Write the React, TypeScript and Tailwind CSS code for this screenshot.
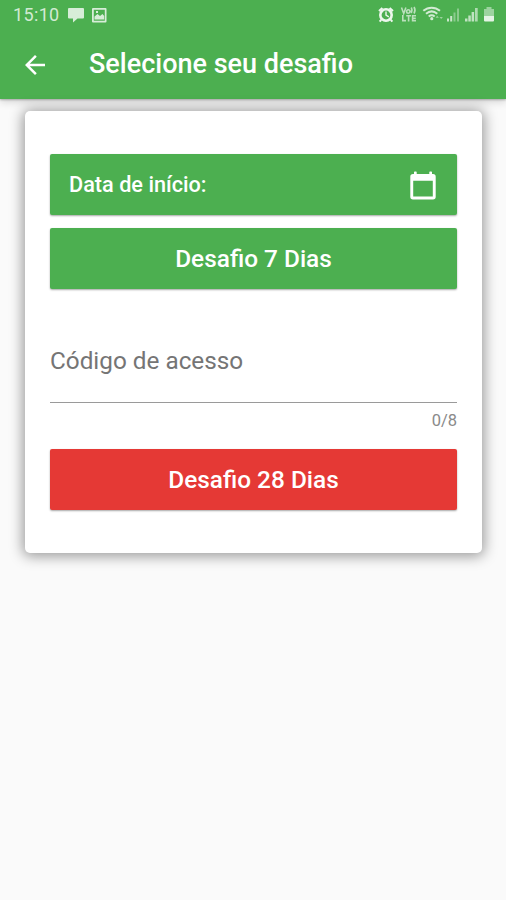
import { useState } from 'react';
import { MdArrowBack } from 'react-icons/md';

function StatusIcons() {
  return (
    <svg className="h-8 w-[140px]" viewBox="0 0 140 32" fill="#fff" stroke="none">
      {/* alarm */}
      <g opacity="0.9">
        <path d="M12.300 10.200l3.400-3 1.400 1.600-3.400 3zM27.700 10.200l-3.400-3-1.400 1.600 3.400 3z" />
        <path fillRule="evenodd" d="M20 8a7 7 0 1 0 0 14 7 7 0 0 0 0-14zm0 2.600a4.400 4.400 0 1 1 0 8.800 4.400 4.400 0 0 1 0-8.800z" />
        <path d="M19.300 11.500h1.400v3.300l2.500 1.500-.7 1.200-3.200-2zM14.500 19l1.500 1.500-1.600 1.700-1.500-1.200zM25.500 19L24 20.500l1.600 1.700 1.500-1.200z" />
      </g>
      {/* volte */}
      <g fill="none" stroke="#fff" strokeWidth="1.6" opacity="0.62">
        <path d="M35.500 7.500l2.200 6 2.200-6M42.300 9.800a1.700 1.700 0 1 0 0 3.400 1.700 1.700 0 0 0 0-3.400M45.300 7.500q1.500 2.800 0 5.500M48 7q2 3.300 0 6.500" />
        <path d="M36.800 15v5.600h3.200M40.200 15.700h4.800M42.600 15.700v5.700M50 15.700h-3.400v4.900H50M46.600 18.200h3.200" />
      </g>
      {/* wifi */}
      <g fill="none" stroke="#fff" strokeWidth="2" opacity="0.75">
        <path d="M57.300 10.800c5-4.200 11.700-4.200 16.700 0M60 13.700c3.700-3 7.700-3 11.300 0M62.700 16.500c2-1.600 4-1.600 6 0" />
      </g>
      <circle cx="65.800" cy="18.700" r="1.600" opacity="0.75" />
      <path d="M69.500 17.700l1.700-2 1.700 2zM73.500 17l1.700 2 1.700-2z" opacity="0.45" />
      {/* signal */}
      <path d="M81 18.500h2v3h-2zM84.200 16h2v5.500h-2z" opacity="0.7" />
      <path d="M87.500 12.500h2v9h-2zM91 8.500h2v13h-2z" opacity="0.35" />
      <path d="M99 18.500h2.500v3H99zM102.300 15.500h2.500v6h-2.500zM105.600 12h2.500v9.500h-2.500z" opacity="0.65" />
      <path d="M109 8h2.700v13.500H109z" opacity="0.55" />
      {/* battery */}
      <path d="M120.500 7h5v2h2.500v7h-10V9h2.500z" opacity="0.45" />
      <path d="M118 16h10v4.500q0 1-1 1h-8q-1 0-1-1z" opacity="0.85" />
    </svg>
  );
}

function CalendarIcon() {
  return (
    <svg className="mt-px h-[29px] w-[26px]" viewBox="0 0 26 29" fill="#fff">
      <path
        fillRule="evenodd"
        d="M3 3h1V1.200q0-.7.7-.7H6q.7 0 .7.700V3h12.600V1.200q0-.7.700-.7h1.300q.7 0 .7.700V3h1q2.700 0 2.700 2.700v20q0 2.700-2.700 2.700H3Q.3 28.400.3 25.700v-20Q.3 3 3 3zm.2 6.700v15.800h19.600V9.700z"
      />
    </svg>
  );
}

function StatusBar() {
  return (
    <div className="flex h-8 items-center justify-between">
      <div className="flex items-center pl-[13px]">
        <span className="w-[54px] pb-0.5 text-[18px] leading-7 tracking-[0.35px] text-white/75">15:10</span>
        <svg className="h-8 w-10" viewBox="0 0 40 32" fill="#fff" opacity="0.78">
          <path d="M2 8h14q1 0 1 1v8.500q0 1-1 1h-5.500l-4.500 4v-4H2q-1 0-1-1V9q0-1 1-1z" />
          <path fillRule="evenodd" d="M26 8h12.500q1 0 1 1v12.500q0 1-1 1H26q-1 0-1-1V9q0-1 1-1zm.8 1.800v10.900h11V9.800z" />
          <path d="M27.500 19.500v-3l3-2.500 2.500 2 2.500-2 1.700 2v3.500zM29 11h2v2h-2z" />
        </svg>
      </div>
      <StatusIcons />
    </div>
  );
}

export default function App() {
  const [code, setCode] = useState('');

  return (
    <div className="flex min-h-[900px] w-full flex-col bg-[#fafafa] font-['Roboto',sans-serif]">
      <header className="h-[98.5px] bg-[#4caf50] shadow-[0_1px_2px_rgba(0,0,0,0.25),0_3px_8px_rgba(0,0,0,0.15)]">
        <StatusBar />
        <div className="flex h-[66px] items-center pl-5">
          <button type="button" aria-label="Voltar" className="mr-[39px] text-white">
            <MdArrowBack className="size-[30px]" />
          </button>
          <h1 className="pb-[3px] text-[27px] leading-8 font-medium text-white">Selecione seu desafio</h1>
        </div>
      </header>

      <main className="mx-6 mt-[12.5px] ml-[25px] flex h-[442px] flex-col rounded-[5px] bg-white px-[25px] pt-[43px] shadow-[0_1px_14px_2px_rgba(0,0,0,0.4)]">
        <button
          type="button"
          className="flex h-[61px] shrink-0 items-center justify-between rounded-[2px] bg-[#4caf50] pr-[21px] pl-[19px] text-white shadow-[0_1px_2px_rgba(0,0,0,0.35)]"
        >
          <span className="text-[21.7px] leading-7 font-medium">Data de início:</span>
          <CalendarIcon />
        </button>
        <button
          type="button"
          className="mt-[13px] h-[61px] shrink-0 rounded-[2px] bg-[#4caf50] pt-px text-[24.400px] leading-8 font-medium text-white shadow-[0_1px_2px_rgba(0,0,0,0.35)]"
        >
          Desafio 7 Dias
        </button>

        <input
          value={code}
          maxLength={8}
          onChange={(e) => setCode(e.target.value)}
          placeholder="Código de acesso"
          className="mt-[31px] h-[83px] w-full shrink-0 border-b border-[#9a9a9a] pb-px text-[24.3px] text-[#333] outline-none placeholder:text-[#757575]"
        />
        <span className="mt-[9px] h-[18px] text-right text-[16.500px] leading-[18px] text-[#8a8a8a]">{code.length}/8</span>

        <button
          type="button"
          className="mt-[19px] h-[61px] shrink-0 rounded-[2px] bg-[#e53935] text-[24.400px] leading-8 font-medium text-white shadow-[0_1px_2px_rgba(0,0,0,0.35)]"
        >
          Desafio 28 Dias
        </button>
      </main>
    </div>
  );
}
